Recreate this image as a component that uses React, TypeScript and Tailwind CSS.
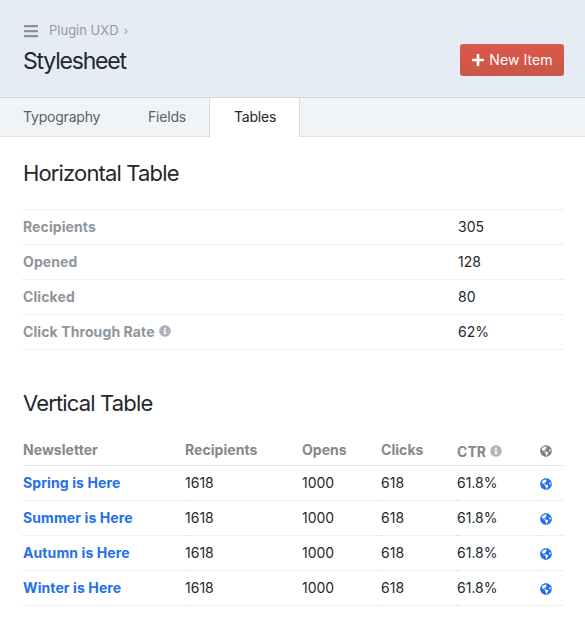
import React from 'react'
import { FaBars, FaPlus, FaInfoCircle, FaGlobeAmericas } from 'react-icons/fa'

const summary = [
  { label: 'Recipients', value: '305' },
  { label: 'Opened', value: '128' },
  { label: 'Clicked', value: '80' },
  { label: 'Click Through Rate', value: '62%', info: true },
]

const newsletters = ['Spring is Here', 'Summer is Here', 'Autumn is Here', 'Winter is Here']

export default function App() {
  return (
    <div className="min-h-[621px] bg-white text-[#23282d] font-['Inter',sans-serif] text-[14px]">
      {/* Page header */}
      <div className="flex h-[98px] items-start justify-between border-b border-[#d3d9e0] bg-[#e5ecf4] pl-[23px] pr-[21px]">
        <div className="pt-[21px]">
          <div className="flex h-[20px] items-center text-[13px] text-[#95999f]">
            <FaBars className="mr-[10px] h-[16px] w-[16px] text-[#8c9197]" />
            <span>Plugin UXD</span>
            <span className="ml-[5px] text-[12px]">›</span>
          </div>
          <h1 className="mt-[6px] text-[23px] leading-[28px] tracking-[-1.2px] font-normal text-[#23282d]">Stylesheet</h1>
        </div>
        <button className="mt-[44px] flex h-[32px] w-[104px] items-center justify-center gap-[4px] rounded-[3px] bg-gradient-to-b from-[#dc584c] to-[#c95747] pb-[1px] text-[14px] tracking-[0.1px] text-white">
          <FaPlus className="h-[14px] w-[14px]" />
          <span>New Item</span>
        </button>
      </div>

      {/* Tabs */}
      <div className="flex h-[39px] border-b border-[#dde1e6] bg-[#f0f4f7] pb-[2px] text-[14px] tracking-[-0.2px] text-[#5b6067]">
        <div className="flex w-[125px] items-center pl-[23px]">Typography</div>
        <div className="flex w-[84px] items-center pl-[23px]">Fields</div>
        <div className="-mb-[3px] flex h-[39px] w-[91px] items-center border-x border-[#d8dce1] bg-white pb-[2px] pl-[24px] text-[#23282d]">Tables</div>
      </div>

      <div className="px-[23px]">
        <h2 className="mt-[22px] text-[22px] leading-[28px] tracking-[-0.85px] font-normal">Horizontal Table</h2>

        <table className="mt-[22px] w-[540px] table-fixed border-collapse">
          <tbody>
            <tr className="h-0 border-b border-dotted border-[#dcdfe3]">
              <td className="w-[435px]"></td>
              <td></td>
            </tr>
            {summary.map((row) => (
              <tr key={row.label} className="h-[35px] border-b border-dotted border-[#dcdfe3]">
                <td className="pb-[2px] font-bold tracking-[0.1px] text-[#8f959c]">
                  <span className="flex items-center gap-[4px]">
                    {row.label}
                    {row.info && <FaInfoCircle className="h-[12px] w-[12px] text-[#aeb3b9]" />}
                  </span>
                </td>
                <td className="pb-[2px]">{row.value}</td>
              </tr>
            ))}
          </tbody>
        </table>

        <h2 className="mt-[39px] text-[22px] leading-[28px] tracking-[-0.85px] font-normal">Vertical Table</h2>

        <table className="mt-[18px] w-[540px] table-fixed border-collapse">
          <thead>
            <tr className="h-[30px] border-b border-[#dfe2e5] text-left tracking-[0.05px] text-[#85888c]">
              <th className="w-[162px] font-bold">Newsletter</th>
              <th className="w-[117px] font-bold">Recipients</th>
              <th className="w-[79px] font-bold">Opens</th>
              <th className="w-[76px] font-bold">Clicks</th>
              <th className="w-[82px] font-bold">
                <span className="mt-[3px] flex items-center gap-[4px]">
                  CTR
                  <FaInfoCircle className="h-[12px] w-[12px] text-[#b3b7bc]" />
                </span>
              </th>
              <th className="pt-[2px] pl-[1px]">
                <FaGlobeAmericas className="h-[12px] w-[12px] text-[#7f8184]" />
              </th>
            </tr>
          </thead>
          <tbody>
            {newsletters.map((name) => (
              <tr key={name} className="h-[35px] border-b border-dotted border-[#dcdfe3]">
                <td className="font-bold tracking-[0.1px] text-[#2370e8]">{name}</td>
                <td>1618</td>
                <td>1000</td>
                <td>618</td>
                <td>61.8%</td>
                <td className="pt-[2px] pl-[1px]">
                  <FaGlobeAmericas className="h-[12px] w-[12px] text-[#2370e8]" />
                </td>
              </tr>
            ))}
          </tbody>
        </table>
      </div>
    </div>
  )
}
